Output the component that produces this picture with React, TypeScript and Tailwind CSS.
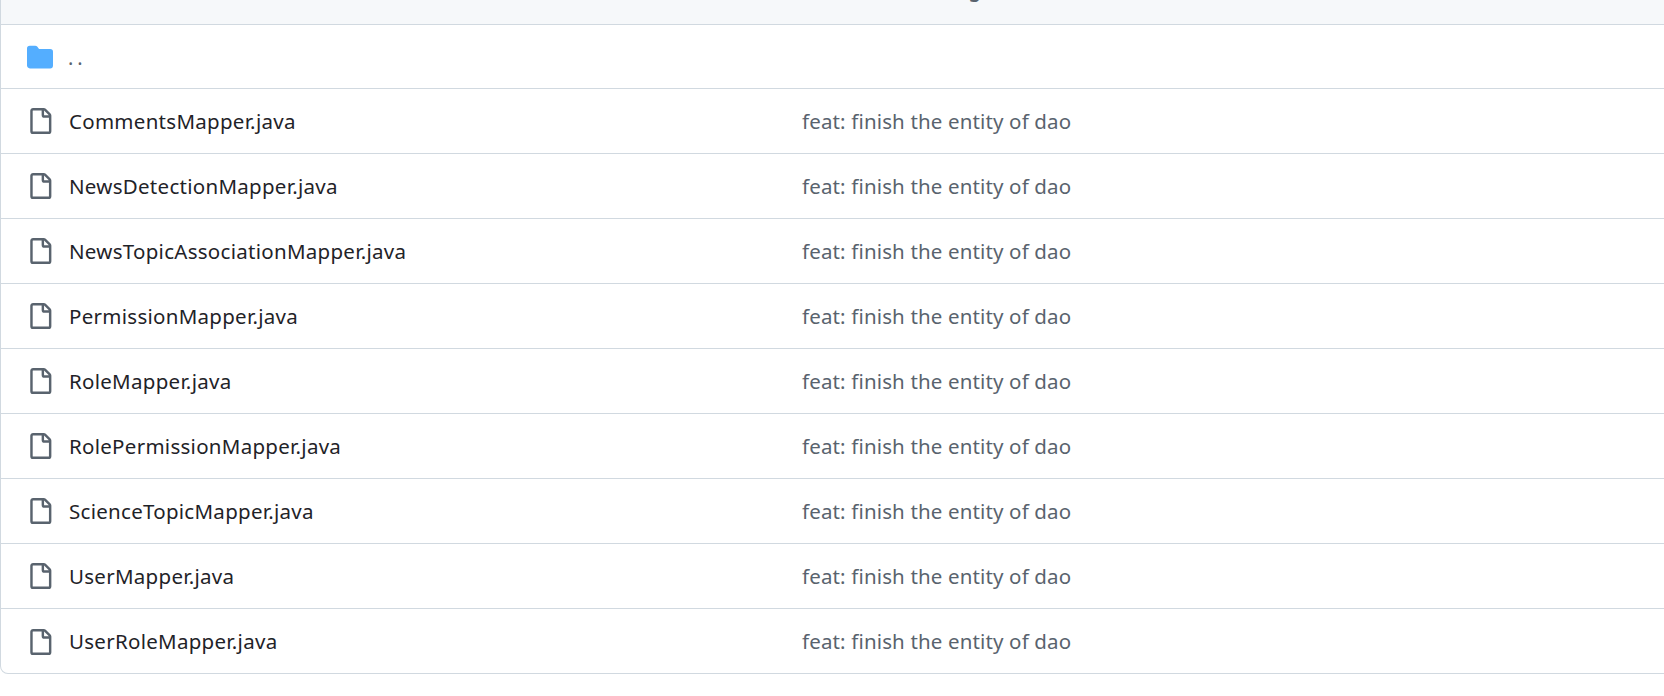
const files = [
  'CommentsMapper.java',
  'NewsDetectionMapper.java',
  'NewsTopicAssociationMapper.java',
  'PermissionMapper.java',
  'RoleMapper.java',
  'RolePermissionMapper.java',
  'ScienceTopicMapper.java',
  'UserMapper.java',
  'UserRoleMapper.java',
]

function FileIcon() {
  return (
    <svg viewBox="0 0 16 16" className="w-[26px] h-[26px] shrink-0 text-[#59636e]" fill="currentColor">
      <path d="M2 1.75C2 .784 2.784 0 3.75 0h6.586c.464 0 .909.184 1.237.513l2.914 2.914c.329.328.513.773.513 1.237v9.586A1.75 1.75 0 0 1 13.25 16h-9.5A1.75 1.75 0 0 1 2 14.25Zm1.75-.25a.25.25 0 0 0-.25.25v12.5c0 .138.112.25.25.25h9.5a.25.25 0 0 0 .25-.25V6h-2.75A1.75 1.75 0 0 1 9 4.25V1.5Zm6.75.062V4.25c0 .138.112.25.25.25h2.688l-.011-.013-2.914-2.914-.013-.011Z" />
    </svg>
  )
}

function FolderIcon() {
  return (
    <svg viewBox="0 0 16 16" className="w-[26px] h-[26px] shrink-0 text-[#54aeff]" fill="currentColor">
      <path d="M1.75 1A1.75 1.75 0 0 0 0 2.75v10.5C0 14.216.784 15 1.75 15h12.5A1.75 1.75 0 0 0 16 13.25v-8.5A1.75 1.75 0 0 0 14.25 3H7.5a.25.25 0 0 1-.2-.1l-.9-1.2C6.07 1.26 5.55 1 5 1H1.75Z" />
    </svg>
  )
}

export default function App() {
  return (
    <div className="h-[696px] bg-white overflow-hidden font-['Noto_Sans','Open_Sans',sans-serif]">
      <div className="w-[1675px] h-[674px] border border-t-0 border-[#d1d9e0] rounded-bl-lg overflow-hidden">
        <div className="h-[25px] bg-[#f6f8fa] border-b border-[#d1d9e0] overflow-hidden relative">
          {/* only the descender of the g is left in view, the rest is scrolled off */}
          <span className="absolute left-[788px] top-[-25px] text-[20px] leading-[30px] font-semibold tracking-[-0.5px] text-[#59636e] whitespace-nowrap">
            Last commit message
          </span>
        </div>
        <div className="h-[64px] flex items-center pl-[26px] border-b border-[#d1d9e0]">
          <FolderIcon />
          <span className="ml-[15px] mt-[2px] text-[20px] tracking-[4px] text-[#59636e]">..</span>
        </div>
        {files.map((name, i) => (
          <div
            key={name}
            className={`h-[65px] flex items-center pl-[26px] ${i < files.length - 1 ? 'border-b border-[#d1d9e0]' : ''}`}
          >
            <FileIcon />
            <span className="w-[733px] ml-[16px] text-[20.5px] tracking-[0.28px] text-[#1f2328]">{name}</span>
            <span className="text-[20.5px] tracking-[0.15px] text-[#59636e]">feat: finish the entity of dao</span>
          </div>
        ))}
      </div>
    </div>
  )
}
